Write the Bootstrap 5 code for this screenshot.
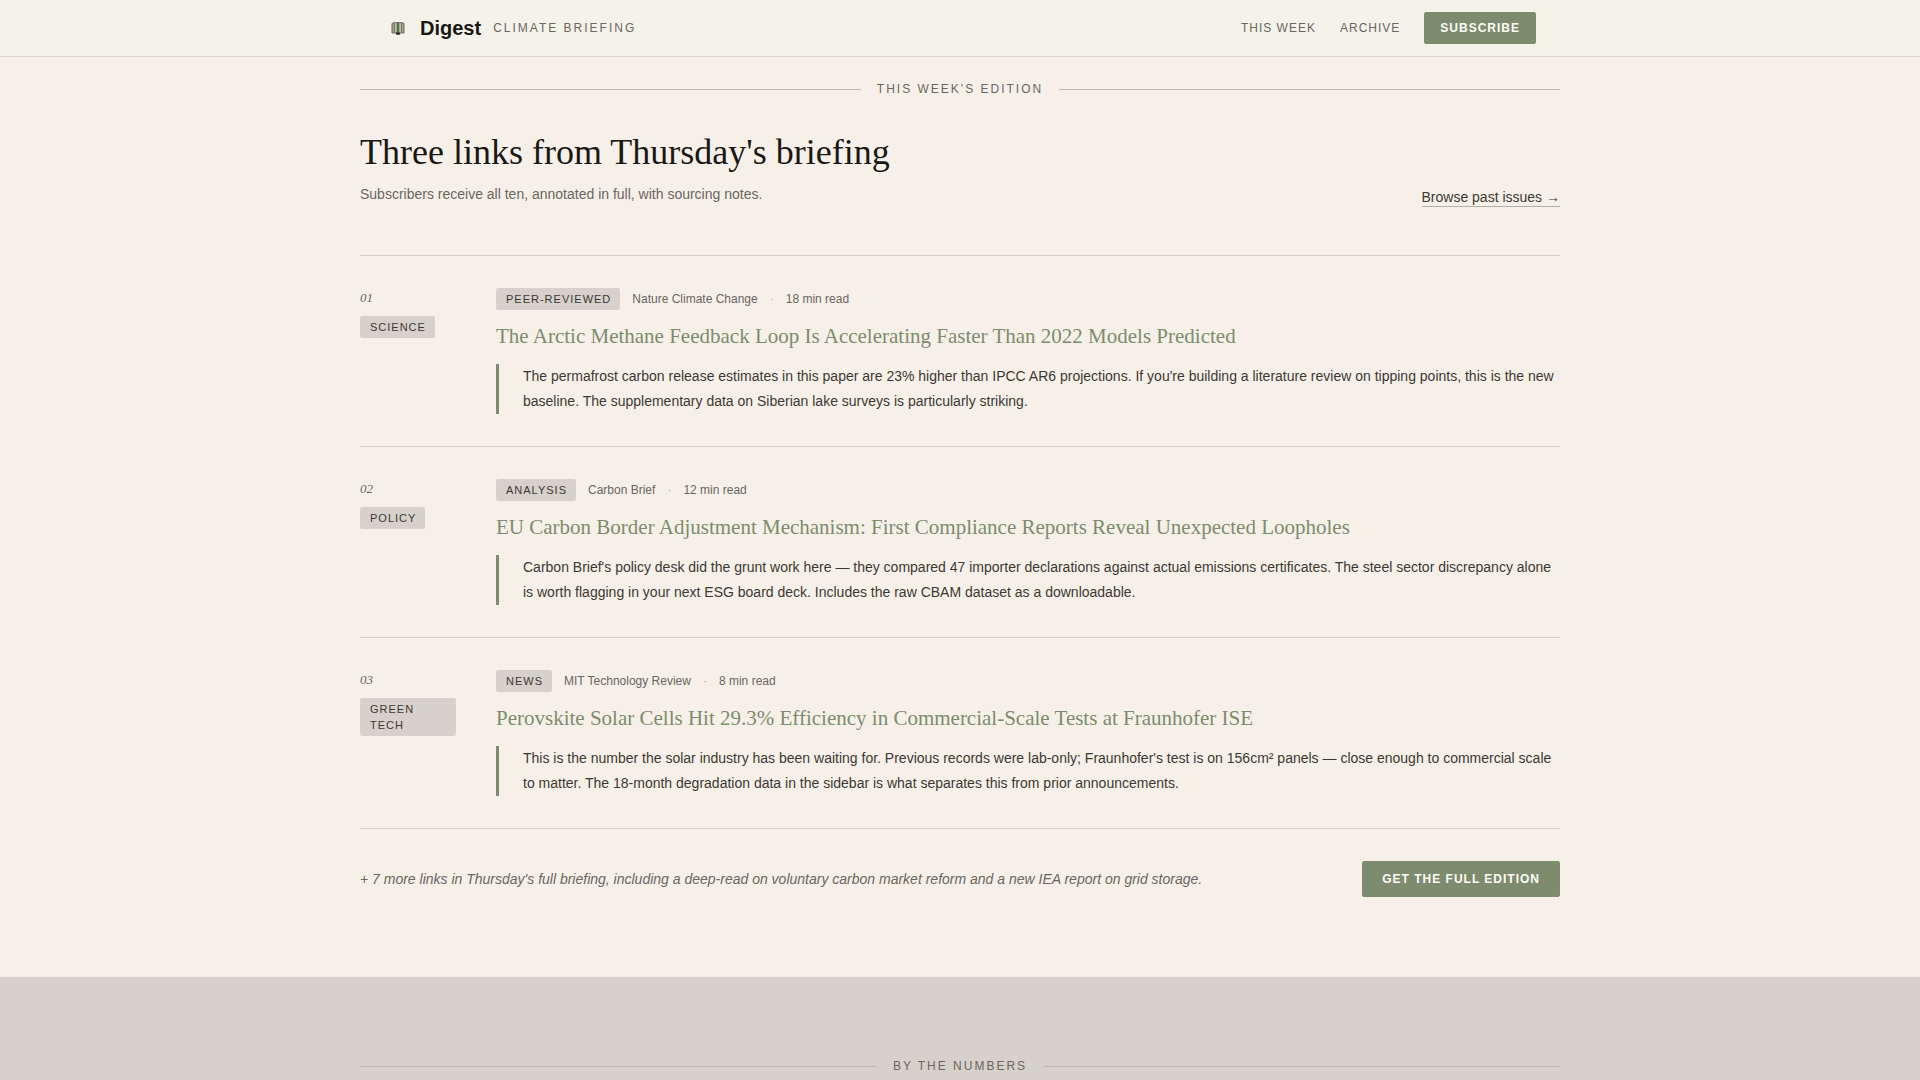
<!DOCTYPE html>
<html lang="en">
<head>
<meta charset="utf-8">
<meta name="viewport" content="width=device-width, initial-scale=1">
<title>Digest – Climate Briefing</title>
<link href="https://cdn.jsdelivr.net/npm/bootstrap@5.3.0/dist/css/bootstrap.min.css" rel="stylesheet">
<style>
  :root { --paper: #f7f0e9; --bar: #f5f2ea; --stone: #d6d1ca; --line: #d0cbc6; --rule: #c0b8b3; --moss: #7d8c6e; --ink: #1a1814; --body: #3d3832; --soft: #6b665f; }
  body { background: var(--paper); color: var(--body); font-family: "Liberation Sans", Arial, sans-serif; font-size: 14px; line-height: 24px; }
  .wrap { max-width: 1200px; }
  .site-bar { background: var(--bar); border-bottom: 1px solid var(--stone); }
  .bar-inner { padding: 12px 24px; }
  .brand-name { color: var(--ink); font-size: 20px; font-weight: 700; }
  .brand-tag, .eyebrow { color: var(--soft); font-size: 12px; letter-spacing: 2px; text-transform: uppercase; }
  .bar-link { color: var(--soft); font-size: 12px; letter-spacing: 1px; text-decoration: none; text-transform: uppercase; }
  .btn-moss { --bs-btn-color: #fdfbf5; --bs-btn-bg: var(--moss); --bs-btn-border-color: var(--moss); --bs-btn-hover-color: #fff; --bs-btn-hover-bg: #6c7b5e; --bs-btn-hover-border-color: #6c7b5e; --bs-btn-font-size: 12px; --bs-btn-font-weight: 700; --bs-btn-line-height: 18px; --bs-btn-border-radius: 2px; --bs-btn-padding-y: 6px; --bs-btn-padding-x: 15px; letter-spacing: 1px; text-transform: uppercase; }
  .btn-wide { --bs-btn-padding-y: 8px; --bs-btn-padding-x: 19px; }
  .edition { padding-top: 23px; padding-bottom: 80px; }
  .eyebrow { line-height: 18px; font-weight: 400; margin: 0; }
  .eyebrow::before, .eyebrow::after { content: ""; flex: 1; height: 1px; background: var(--rule); }
  .headline { color: var(--ink); font-family: "Liberation Serif", "Times New Roman", serif; font-size: 36px; line-height: 44px; font-weight: 400; }
  .sub { color: var(--soft); line-height: 25px; }
  .past-link { color: var(--body); line-height: 17px; text-decoration: none; border-bottom: 1px solid #b5afa9; }
  .story { border-top: 1px solid var(--line); padding: 32px 0; gap: 40px; }
  .story-side { width: 96px; }
  .story-no { color: var(--soft); font: italic 13px/20px "Liberation Serif", serif; }
  .tag { background: var(--stone); color: var(--body); border-radius: 2px; font-size: 11px; line-height: 16px; letter-spacing: 1px; padding: 3px 9px 3px 10px; text-transform: uppercase; }
  .meta { color: var(--soft); font-size: 12px; line-height: 22px; }
  .dot { color: #b5afa9; }
  .story-title { font-family: "Liberation Serif", "Times New Roman", serif; font-size: 21px; line-height: 28px; font-weight: 400; margin: 12px 0 14px; }
  .story-title a { color: var(--moss); text-decoration: none; }
  .note { border-left: 3px solid var(--moss); padding-left: 24px; line-height: 25px; margin: 0; }
  .more { border-top: 1px solid var(--line); padding-top: 32px; }
  .numbers { background: var(--stone); padding: 80px 0; }
</style>
</head>
<body>
<header class="site-bar">
  <div class="container-fluid wrap bar-inner d-flex align-items-center justify-content-between">
    <div class="d-flex align-items-center">
      <svg class="me-2" width="28" height="28" viewBox="0 0 28 28" aria-hidden="true">
        <path d="M8 9.5 Q11 7.5 14 9.5 Q17 7.5 20 9.5 V19 Q17 18 14 20.500 Q11 18 8 19Z" fill="#a5a393" stroke="#69685a" stroke-width="1"/>
        <path d="M10.500 9v9M17.500 9v9" stroke="#77776a" stroke-width="1"/>
        <path d="M12 9v9.500M16 9v9.500" stroke="#d4d9c3" stroke-width="1"/>
        <path d="M14 8v12" stroke="#587048" stroke-width="2.500"/>
        <path d="M12 19.500h4" stroke="#292b22" stroke-width="2"/>
      </svg>
      <span class="brand-name me-2 pe-1">Digest</span>
      <span class="brand-tag">Climate Briefing</span>
    </div>
    <nav class="d-flex align-items-center gap-4" aria-label="Main">
      <a class="bar-link" href="#edition">This week</a>
      <a class="bar-link" href="#archive">Archive</a>
      <button type="button" class="btn btn-moss">Subscribe</button>
    </nav>
  </div>
</header>
<main>
  <section class="edition container-fluid wrap px-0" id="edition">
    <p class="eyebrow d-flex align-items-center gap-3">This week's edition</p>
    <div class="d-flex justify-content-between align-items-end pt-4 pb-5 mt-2">
      <div>
        <h1 class="headline mb-2">Three links from Thursday's briefing</h1>
        <p class="sub mb-0">Subscribers receive all ten, annotated in full, with sourcing notes.</p>
      </div>
      <a class="past-link" href="#archive">Browse past issues →</a>
    </div>
    <article class="story d-flex">
      <div class="story-side d-flex flex-column align-items-start gap-2 flex-shrink-0">
        <span class="story-no">01</span><span class="tag">Science</span>
      </div>
      <div class="flex-grow-1">
        <div class="meta d-flex align-items-center gap-2"><span class="tag me-1">Peer-reviewed</span><span class="me-1">Nature Climate Change</span><span class="dot me-1">·</span><span>18 min read</span></div>
        <h2 class="story-title"><a href="#arctic">The Arctic Methane Feedback Loop Is Accelerating Faster Than 2022 Models Predicted</a></h2>
        <blockquote class="note">The permafrost carbon release estimates in this paper are 23% higher than IPCC AR6 projections. If you're building a literature review on tipping points, this is the new baseline. The supplementary data on Siberian lake surveys is particularly striking.</blockquote>
      </div>
    </article>
    <article class="story d-flex">
      <div class="story-side d-flex flex-column align-items-start gap-2 flex-shrink-0">
        <span class="story-no">02</span><span class="tag">Policy</span>
      </div>
      <div class="flex-grow-1">
        <div class="meta d-flex align-items-center gap-2"><span class="tag me-1">Analysis</span><span class="me-1">Carbon Brief</span><span class="dot me-1">·</span><span>12 min read</span></div>
        <h2 class="story-title"><a href="#cbam">EU Carbon Border Adjustment Mechanism: First Compliance Reports Reveal Unexpected Loopholes</a></h2>
        <blockquote class="note">Carbon Brief's policy desk did the grunt work here — they compared 47 importer declarations against actual emissions certificates. The steel sector discrepancy alone is worth flagging in your next ESG board deck. Includes the raw CBAM dataset as a downloadable.</blockquote>
      </div>
    </article>
    <article class="story d-flex">
      <div class="story-side d-flex flex-column align-items-start gap-2 flex-shrink-0">
        <span class="story-no">03</span><span class="tag">Green Tech</span>
      </div>
      <div class="flex-grow-1">
        <div class="meta d-flex align-items-center gap-2"><span class="tag me-1">News</span><span class="me-1">MIT Technology Review</span><span class="dot me-1">·</span><span>8 min read</span></div>
        <h2 class="story-title"><a href="#solar">Perovskite Solar Cells Hit 29.3% Efficiency in Commercial-Scale Tests at Fraunhofer ISE</a></h2>
        <blockquote class="note">This is the number the solar industry has been waiting for. Previous records were lab-only; Fraunhofer's test is on 156cm² panels — close enough to commercial scale to matter. The 18-month degradation data in the sidebar is what separates this from prior announcements.</blockquote>
      </div>
    </article>
    <div class="more d-flex align-items-center justify-content-between">
      <p class="sub fst-italic mb-0">+ 7 more links in Thursday's full briefing, including a deep-read on voluntary carbon market reform and a new IEA report on grid storage.</p>
      <button type="button" class="btn btn-moss btn-wide">Get the full edition</button>
    </div>
  </section>
  <section class="numbers">
    <div class="container-fluid wrap px-0">
      <h2 class="eyebrow d-flex align-items-center gap-3">By the numbers</h2>
    </div>
  </section>
</main>
<script src="https://cdn.jsdelivr.net/npm/bootstrap@5.3.0/dist/js/bootstrap.bundle.min.js"></script>
</body>
</html>
